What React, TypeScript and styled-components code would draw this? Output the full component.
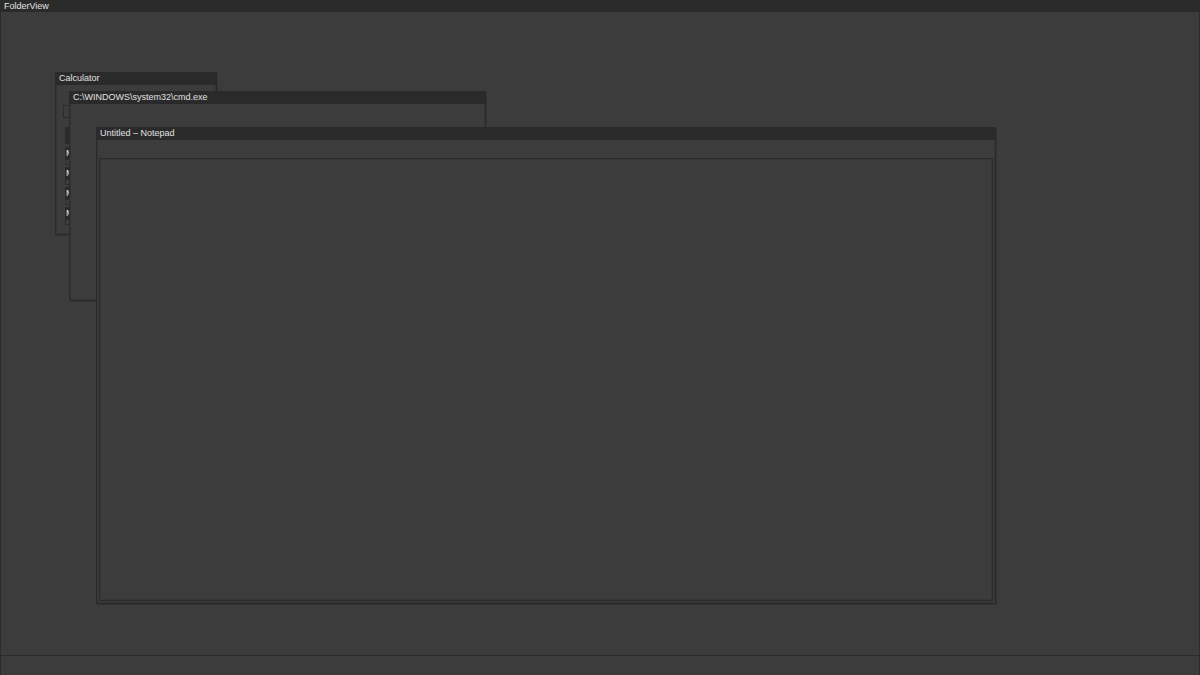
import React from "react";
import styled, { createGlobalStyle } from "styled-components";

const Global = createGlobalStyle`
  html, body { margin: 0; padding: 0; background: #3c3c3c; }
  * { box-sizing: border-box; }
`;

const Screen = styled.div`
  width: 1200px;
  height: 675px;
  display: flex;
  flex-direction: column;
  background: #3c3c3c;
  font-family: "Liberation Sans", Arial, sans-serif;
  color: #e2e2e2;
  overflow: hidden;
`;

const MenuBar = styled.div`
  height: 12px;
  background: #2a2a2a;
  font-size: 9px;
  line-height: 12px;
  padding-left: 4px;
  flex: none;
`;

const Desktop = styled.div`
  position: relative;
  flex: 1;
  border-left: 1px solid #2c2c2c;
  border-right: 1px solid #2c2c2c;
  border-bottom: 1px solid #2a2a2a;
`;

const StatusBar = styled.div`
  height: 19px;
  flex: none;
  border-left: 1px solid #2c2c2c;
  border-right: 1px solid #2c2c2c;
`;

const Win = styled.div<{ $x: number; $y: number; $w: number; $h: number }>`
  position: absolute;
  left: ${(p) => p.$x}px;
  top: ${(p) => p.$y}px;
  width: ${(p) => p.$w}px;
  height: ${(p) => p.$h}px;
  border: 1px solid #2b2b2b;
  border-top: none;
  background: #3c3c3c;
  display: flex;
  flex-direction: column;
  box-shadow: 1px 1px 0 #333;
`;

const TitleBar = styled.div`
  height: 13px;
  flex: none;
  background: #2a2a2a;
  font-size: 9px;
  line-height: 13px;
  padding-left: 4px;
  margin: 0 -1px;
  white-space: nowrap;
  overflow: hidden;
`;

const Body = styled.div<{ $pad: string }>`
  flex: 1;
  display: flex;
  flex-direction: column;
  padding: ${(p) => p.$pad};
  border: 1px solid #343434;
  border-top: none;
`;

const Display = styled.div`
  height: 13px;
  width: 60px;
  border: 1px solid #2a2a2a;
  border-right-color: #333;
`;

const CalcButtons = styled.div`
  display: flex;
  flex-direction: column;
  margin-top: 9px;
  padding-left: 2px;
`;

const WideKey = styled.div`
  width: 60px;
  height: 17px;
  background: #2a2a2a;
  margin-bottom: 3px;
`;

const MemRow = styled.div`
  display: flex;
  flex-direction: column;
  height: 20px;
`;

const MemKey = styled.div`
  width: 40px;
  height: 13px;
  background: #2a2a2a;
  font-size: 9px;
  line-height: 13px;
  padding-left: 1px;
  color: #e6e6e6;
`;

const MemSub = styled.div`
  width: 20px;
  height: 5px;
  border: 1px solid #2c2c2c;
  border-top: none;
`;

const TextArea = styled.div`
  flex: 1;
  border: 1px solid #2b2b2b;
  box-shadow: inset 0 0 0 1px #363636;
`;

export default function App() {
  return (
    <>
      <Global />
      <Screen>
        <MenuBar>FolderView</MenuBar>
        <Desktop>
          <Win $x={54} $y={60} $w={162} $h={163}>
            <TitleBar>Calculator</TitleBar>
            <Body $pad="20px 0 0 6px">
              <Display />
              <CalcButtons>
                <WideKey />
                {[0, 1, 2, 3].map((i) => (
                  <MemRow key={i}>
                    <MemKey>M</MemKey>
                    <MemSub />
                  </MemRow>
                ))}
              </CalcButtons>
            </Body>
          </Win>
          <Win $x={68} $y={79} $w={417} $h={210}>
            <TitleBar>C:\WINDOWS\system32\cmd.exe</TitleBar>
            <Body $pad="0" />
          </Win>
          <Win $x={95} $y={115} $w={900} $h={477}>
            <TitleBar>Untitled – Notepad</TitleBar>
            <Body $pad="18px 1px 1px 1px">
              <TextArea />
            </Body>
          </Win>
        </Desktop>
        <StatusBar />
      </Screen>
    </>
  );
}
